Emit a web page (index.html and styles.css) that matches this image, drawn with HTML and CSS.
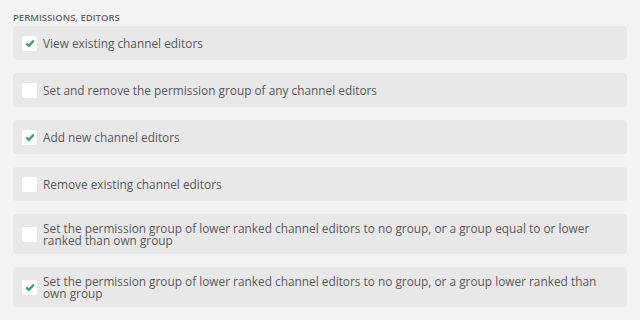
FILE: index.html
```html
<!DOCTYPE html>
<html lang="en">

<head>
    <meta charset="UTF-8">
    <meta name="viewport" content="width=device-width, initial-scale=1.0">
    <title>Permissions</title>
    <link rel="stylesheet" href="styles.css">
</head>

<body>
    <div class="section">
        <h2 class="section-title">Permissions, Editors</h2>
        <div class="perm-list">
            <label class="perm checked"><span class="box"><svg viewBox="0 0 12 12"><path d="M2.3 6.4l2.5 2.4 5-5.2"/></svg></span><span class="perm-text">View existing channel editors</span></label>
            <label class="perm"><span class="box"></span><span class="perm-text">Set and remove the permission group of any channel editors</span></label>
            <label class="perm checked"><span class="box"><svg viewBox="0 0 12 12"><path d="M2.3 6.4l2.5 2.4 5-5.2"/></svg></span><span class="perm-text">Add new channel editors</span></label>
            <label class="perm"><span class="box"></span><span class="perm-text">Remove existing channel editors</span></label>
            <label class="perm"><span class="box"></span><span class="perm-text">Set the permission group of lower ranked channel editors to no group, or a group equal to or lower ranked than own group</span></label>
            <label class="perm checked"><span class="box"><svg viewBox="0 0 12 12"><path d="M2.3 6.4l2.5 2.4 5-5.2"/></svg></span><span class="perm-text">Set the permission group of lower ranked channel editors to no group, or a group lower ranked than own group</span></label>
        </div>
    </div>
</body>

</html>
```

FILE: styles.css
```css
body {
    font-family: "Open Sans", sans-serif;
    margin: 0;
    padding: 0;
    background-color: #f3f3f3;
    color: #5a5a5a;
}

.section {
    padding: 12px 13px 0 13px;
}

.section-title {
    margin: 0 0 3px 0;
    font-size: 9.5px;
    font-weight: 600;
    text-transform: uppercase;
    color: #666;
    line-height: 11px;
}

.perm-list {
    display: flex;
    flex-direction: column;
    gap: 13px;
}

.perm {
    display: flex;
    align-items: center;
    min-height: 34px;
    padding: 0 26px 0 9px;
    background-color: #e8e8e8;
    border-radius: 4px;
    box-sizing: border-box;
}

.box {
    flex: none;
    width: 15px;
    height: 15px;
    margin-right: 6px;
    background-color: #fff;
    border-radius: 2px;
    display: flex;
    align-items: center;
    justify-content: center;
}

.box svg {
    width: 12px;
    height: 12px;
    fill: none;
    stroke: #3aa859;
    stroke-width: 2.3;
}

.perm-text {
    font-size: 11.85px;
    line-height: 12px;
    padding: 8px 0;
}
```
